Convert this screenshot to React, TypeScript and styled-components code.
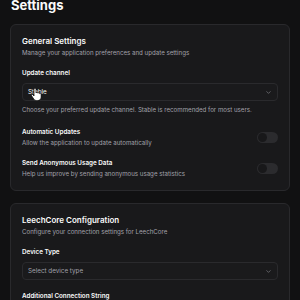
import React from "react";
import styled, { createGlobalStyle } from "styled-components";
import { ChevronDown } from "lucide-react";

const GlobalStyle = createGlobalStyle`
  html, body { margin: 0; padding: 0; background: #111112; }
  body { font-family: Inter, "Noto Sans", sans-serif; color: #fafafa; -webkit-font-smoothing: antialiased; }
  * { box-sizing: border-box; }
`;

const Page = styled.div`
  display: flex;
  flex-direction: column;
  gap: 12px;
  padding: 0 10px 20px;
  overflow: hidden;
  height: 300px;
`;

const PageTitle = styled.h1`
  margin: -1px 0 0 1px;
  font-size: 13px;
  line-height: 13px;
  font-weight: 700;
  color: #fafafa;
`;

const Card = styled.section`
  background: #19191b;
  border: 1px solid #29292c;
  border-radius: 6px;
  padding: 12px 11px;
  display: flex;
  flex-direction: column;
`;

const CardHeader = styled.div`
  display: flex;
  flex-direction: column;
  gap: 2px;
  margin-bottom: 12px;
`;

const CardTitle = styled.h2`
  margin: 0;
  font-size: 8px;
  line-height: 9px;
  font-weight: 600;
  color: #fafafa;
`;

const Muted = styled.p`
  margin: 0;
  font-size: 6.15px;
  line-height: 9px;
  color: #a1a1aa;
`;

const Field = styled.div`
  display: flex;
  flex-direction: column;
  gap: 5px;
`;

const Label = styled.div`
  font-size: 6.3px;
  line-height: 9px;
  font-weight: 600;
  color: #fafafa;
`;

const SelectTrigger = styled.div<{ $placeholder?: boolean }>`
  position: relative;
  height: 18px;
  border: 1px solid #2a2a2d;
  border-radius: 4px;
  background: #1a1a1c;
  display: flex;
  align-items: center;
  justify-content: space-between;
  padding: 0 5px;
  font-size: 6.3px;
  color: ${(p) => (p.$placeholder ? "#a1a1aa" : "#fafafa")};
  svg.chev { color: #8e8e95; }
`;

const Helper = styled(Muted)`
  margin: -1px 0 2px;
`;

const SwitchRow = styled.div`
  display: flex;
  align-items: center;
  justify-content: space-between;
  margin-top: 12px;
`;

const SwitchText = styled.div`
  display: flex;
  flex-direction: column;
  gap: 1px;
`;

const SwitchTrack = styled.div`
  width: 21px;
  height: 11px;
  border-radius: 6px;
  background: #2b2b2e;
  padding: 1px;
  display: flex;
  align-items: center;
`;

const SwitchThumb = styled.div`
  width: 9px;
  height: 9px;
  border-radius: 50%;
  background: #18181a;
`;

const Cursor = styled.svg`
  position: absolute;
  left: 8px;
  top: 4px;
  pointer-events: none;
`;

const HandCursor = () => (
  <Cursor width="10" height="13" viewBox="0 0 20 26">
    <path
      d="M6 2.5c0-1.2 1-2 2-2s2 .8 2 2V10c.3-.8 1-1.3 1.9-1.3 1 0 1.8.7 1.9 1.6.4-.5 1-.8 1.7-.8 1 0 1.9.8 1.9 1.9.3-.2.7-.3 1.1-.3 1 0 1.8.8 1.8 1.8V18c0 4-2.8 7.2-6.8 7.2H11c-2.3 0-4-1-5.3-2.9L1.2 15.6c-.6-.9-.3-2 .6-2.5.8-.5 1.9-.3 2.5.5L6 16V2.5z"
      fill="#fff"
      stroke="#000"
      strokeWidth="1.4"
    />
  </Cursor>
);

const Toggle = () => (
  <SwitchTrack>
    <SwitchThumb />
  </SwitchTrack>
);

export default function App() {
  return (
    <>
      <GlobalStyle />
      <Page>
        <PageTitle>Settings</PageTitle>
        <Card>
          <CardHeader>
            <CardTitle>General Settings</CardTitle>
            <Muted>Manage your application preferences and update settings</Muted>
          </CardHeader>
          <Field>
            <Label>Update channel</Label>
            <SelectTrigger>
              <span>Stable</span>
              <ChevronDown className="chev" size={7} strokeWidth={2} />
              <HandCursor />
            </SelectTrigger>
            <Helper>Choose your preferred update channel. Stable is recommended for most users.</Helper>
          </Field>
          <SwitchRow>
            <SwitchText>
              <Label>Automatic Updates</Label>
              <Muted>Allow the application to update automatically</Muted>
            </SwitchText>
            <Toggle />
          </SwitchRow>
          <SwitchRow>
            <SwitchText>
              <Label>Send Anonymous Usage Data</Label>
              <Muted>Help us improve by sending anonymous usage statistics</Muted>
            </SwitchText>
            <Toggle />
          </SwitchRow>
        </Card>
        <Card>
          <CardHeader>
            <CardTitle>LeechCore Configuration</CardTitle>
            <Muted>Configure your connection settings for LeechCore</Muted>
          </CardHeader>
          <Field>
            <Label>Device Type</Label>
            <SelectTrigger $placeholder>
              <span>Select device type</span>
              <ChevronDown className="chev" size={7} strokeWidth={2} />
            </SelectTrigger>
          </Field>
          <SwitchRow>
            <Label>Additional Connection String</Label>
          </SwitchRow>
        </Card>
      </Page>
    </>
  );
}
